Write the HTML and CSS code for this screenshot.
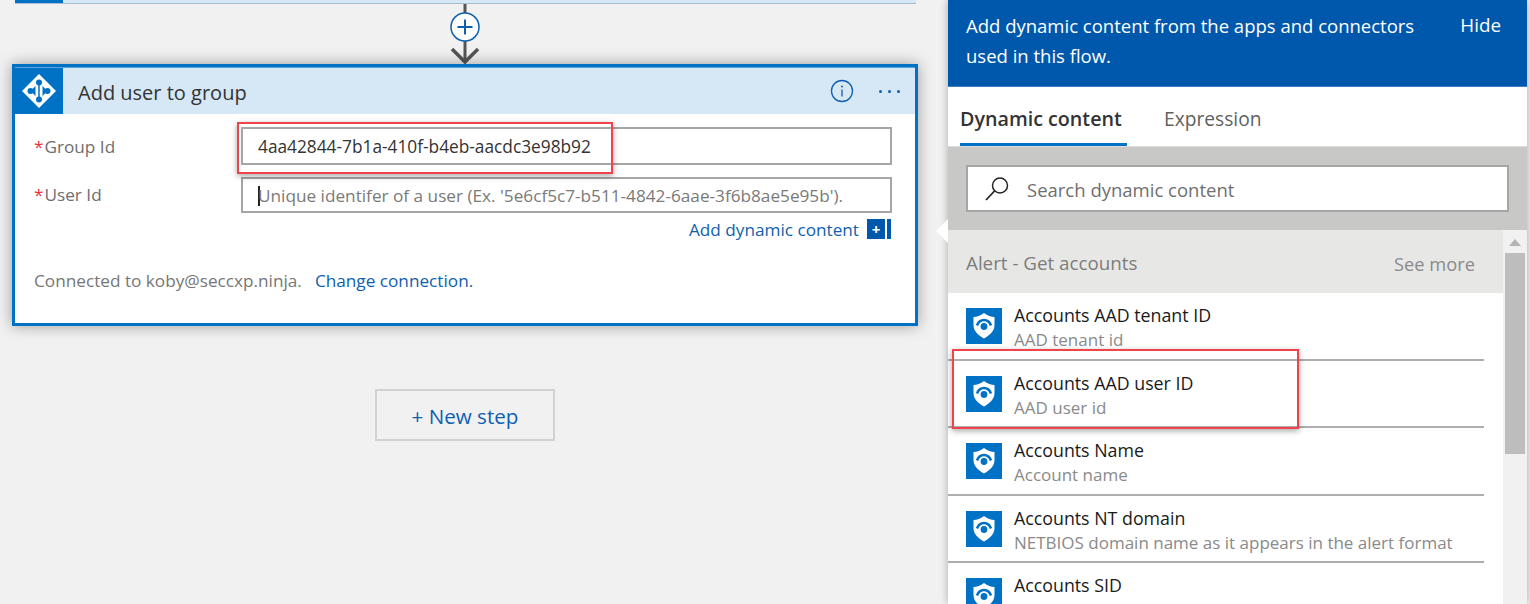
FILE: index.html
```html
<!DOCTYPE html>
<html lang="en">
<head>
<meta charset="utf-8">
<title>Add user to group</title>
<link rel="stylesheet" href="styles.css">
</head>
<body>
<svg class="defs" width="0" height="0" aria-hidden="true">
  <symbol id="shield" viewBox="0 0 36 36">
    <rect width="36" height="36" fill="#0072c6"/>
    <path d="M18 5C21.500 7.500 25 9 28.500 9V17C28.500 23 24 27 18 30.500C12 27 7.500 23 7.500 17V9C11 9 14.500 7.500 18 5Z" fill="#fff"/>
    <path d="M11 17.500C12.500 13.500 15 12 18 12C21 12 23.500 13.500 25 17.500" fill="none" stroke="#0072c6" stroke-width="2.600"/>
    <circle cx="18" cy="18.500" r="3.400" fill="#0072c6"/>
  </symbol>
</svg>
<div class="frame">
  <main class="canvas">
    <div class="prev-card"><span class="prev-mark"></span></div>
    <svg class="connector" width="32" height="60" viewBox="0 1 32 60">
      <path d="M16 0V59" stroke="#555" stroke-width="3" fill="none"/>
      <path d="M3 46L16 59L29 46" stroke="#555" stroke-width="3.500" fill="none"/>
      <circle cx="16" cy="24" r="14" fill="#fff" stroke="#0f5fb0" stroke-width="1.500"/>
      <path d="M8.500 24H23.500M16 16.500V31.500" stroke="#0f5fb0" stroke-width="2" fill="none"/>
    </svg>
    <section class="card">
      <header class="card-head">
        <span class="card-logo">
          <svg width="36" height="36" viewBox="0 0 36 36">
            <path d="M18 1L35 18L18 35L1 18Z" fill="#fff"/>
            <path d="M18 9.500L26.500 18L18 26.500L9.500 18Z" fill="#0072c6"/>
            <path d="M14.500 11H21.500V25H14.500Z" fill="#fff"/>
            <path d="M18 11V25" stroke="#0072c6" stroke-width="1.500"/>
            <circle cx="18" cy="9.500" r="3" fill="#0072c6"/>
            <circle cx="9.500" cy="18" r="3" fill="#0072c6"/>
            <circle cx="26.500" cy="18" r="3" fill="#0072c6"/>
            <circle cx="18" cy="26.500" r="3" fill="#0072c6"/>
          </svg>
        </span>
        <h2 class="card-title">Add user to group</h2>
        <svg class="info" width="24" height="24" viewBox="0 0 24 24">
          <circle cx="12" cy="12" r="10.500" fill="none" stroke="#0f5fb0" stroke-width="1.300"/>
          <path d="M12 10.500V17.500" stroke="#0f5fb0" stroke-width="1.300"/>
          <circle cx="12" cy="7.500" r="1" fill="#0f5fb0"/>
        </svg>
        <span class="dots"><i></i><i></i><i></i></span>
      </header>
      <div class="card-body">
        <div class="field">
          <label class="field-label"><span class="req">*</span>Group Id</label>
          <div class="input">4aa42844-7b1a-410f-b4eb-aacdc3e98b92</div>
        </div>
        <div class="field field-second">
          <label class="field-label"><span class="req">*</span>User Id</label>
          <div class="input input-empty"><span class="caret"></span>Unique identifer of a user (Ex. '5e6cf5c7-b511-4842-6aae-3f6b8ae5e95b').</div>
        </div>
        <div class="dyn-row">
          <a class="link dyn-link">Add dynamic content</a>
          <span class="dyn-btn">+</span><span class="dyn-bar"></span>
        </div>
        <p class="conn">Connected to koby@seccxp.ninja.<a class="link conn-link">Change connection.</a></p>
      </div>
    </section>
    <button class="new-step">+ New step</button>
  </main>

  <aside class="panel">
    <span class="notch"></span>
    <div class="panel-head">
      <p class="panel-msg">Add dynamic content from the apps and connectors used in this flow.</p>
      <span class="panel-hide">Hide</span>
    </div>
    <div class="tabs">
      <span class="tab tab-active">Dynamic content</span>
      <span class="tab tab-other">Expression</span>
    </div>
    <div class="search-band">
      <div class="search">
        <svg width="26" height="26" viewBox="0 0 26 26">
          <circle cx="16" cy="9.500" r="7.500" fill="#fff" stroke="#222" stroke-width="1.500"/>
          <path d="M10.500 15L2 24" stroke="#222" stroke-width="1.800"/>
        </svg>
        <span class="search-text">Search dynamic content</span>
      </div>
    </div>
    <div class="list-wrap">
      <div class="list">
        <div class="section"><span>Alert - Get accounts</span><span class="see-more">See more</span></div>
        <div class="item"><svg class="item-icon"><use href="#shield"/></svg><div><div class="item-title">Accounts AAD tenant ID</div><div class="item-sub">AAD tenant id</div></div></div>
        <div class="item"><svg class="item-icon"><use href="#shield"/></svg><div><div class="item-title">Accounts AAD user ID</div><div class="item-sub">AAD user id</div></div></div>
        <div class="item"><svg class="item-icon"><use href="#shield"/></svg><div><div class="item-title">Accounts Name</div><div class="item-sub">Account name</div></div></div>
        <div class="item"><svg class="item-icon"><use href="#shield"/></svg><div><div class="item-title">Accounts NT domain</div><div class="item-sub">NETBIOS domain name as it appears in the alert format</div></div></div>
        <div class="item"><svg class="item-icon"><use href="#shield"/></svg><div><div class="item-title">Accounts SID</div><div class="item-sub">Account security identifier, e.g. S-1-5-18</div></div></div>
      </div>
      <div class="scrollbar">
        <span class="scroll-up"></span>
        <span class="scroll-thumb"></span>
      </div>
    </div>
  </aside>
  <span class="callout callout-group"></span>
  <span class="callout callout-user"></span>
</div>
</body>
</html>
```
FILE: styles.css
```css
* { box-sizing: border-box; }
html, body { margin: 0; height: 604px; overflow: hidden; }
body { background: #f1f1f1; font-family: "Open Sans", "Noto Sans", sans-serif; color: #333; }
.defs { position: absolute; }
.frame { position: relative; display: flex; width: 1530px; height: 604px; overflow: hidden; }

.canvas { width: 948px; flex: none; display: flex; flex-direction: column; align-items: flex-start; padding-left: 12px; }
.prev-card { width: 901px; height: 4px; margin-left: 3px; background: #d6e8f5; border-bottom: 1px solid #a9bccb; flex: none; }
.prev-mark { display: block; width: 48px; height: 3px; background: #0072c6; }
.connector { display: block; margin-left: 437px; flex: none; }

.card { width: 906px; height: 262px; background: #fff; border: 3px solid #0072c6; box-shadow: 0 0 14px rgba(0,0,0,.35); flex: none; }
.card-head { height: 47px; display: flex; align-items: center; background: #d6e8f5; border-top: 1px solid #58a3da; }
.card-logo { width: 48px; height: 46px; background: #0072c6; display: flex; align-items: center; justify-content: center; flex: none; }
.card-title { margin: 2px 0 0 15px; flex: 1; font-size: 20px; font-weight: 400; color: #333; }
.info { flex: none; margin-right: 25px; }
.dots { display: flex; gap: 6px; margin-right: 15px; }
.dots i { width: 3px; height: 3px; border-radius: 50%; background: #0f5fb0; }

.card-body { padding: 13px 0 0 19px; }
.field { display: flex; align-items: center; height: 38px; }
.field-second { margin-top: 12px; height: 36px; }
.field-label { width: 207px; flex: none; font-size: 17.200px; color: #6e6e6e; }
.field-second .field-label { margin-top: -2px; }
.req { color: #e8343c; margin-right: 1px; }
.input { width: 651px; height: 100%; flex: none; display: flex; align-items: center; padding: 1px 0 0 15px; border: 2px solid #a6a6a6; background: #fff; font-size: 17.300px; color: #333; white-space: nowrap; overflow: hidden; }
.input-empty { color: #7a7a7a; font-size: 17.200px; }
.caret { width: 1.500px; height: 20px; background: #222; flex: none; margin-right: -1.500px; }
.dyn-row { display: flex; align-items: center; justify-content: flex-end; height: 20px; margin: 6px 24px 0 0; }
.link { color: #0f5fb0; }
.dyn-link { font-size: 17.200px; margin-right: 8px; }
.dyn-btn { width: 18px; height: 20px; background: #0058ad; color: #fff; display: flex; align-items: center; justify-content: center; font-size: 15px; font-weight: 700; }
.dyn-bar { width: 4px; height: 20px; margin-left: 2px; background: #0058ad; }
.conn { margin: 30px 0 0; font-size: 17.200px; color: #767676; }
.conn-link { margin-left: 13px; }

.new-step { width: 180px; height: 52px; margin: 63px 0 0 363px; flex: none; padding: 2px 0 0; background: #f1f1f1; border: 2px solid #d2d2d2; font-family: inherit; font-size: 20.600px; color: #0f5fb0; }

.panel { position: relative; width: 579px; height: 604px; flex: none; display: flex; flex-direction: column; background: #fff; box-shadow: 0 0 8px rgba(0,0,0,.3); }
.notch { position: absolute; left: -12px; top: 219px; width: 0; height: 0; border-style: solid; border-width: 12px 12px 12px 0; border-color: transparent #fff transparent transparent; }
.panel-head { height: 87px; flex: none; display: flex; justify-content: space-between; padding: 11px 26px 0 18px; background: #0058ad; color: #fff; border-bottom: 1px solid #3b80c4; }
.panel-msg { margin: 0; width: 480px; font-size: 18.500px; line-height: 29.500px; }
.panel-hide { font-size: 18.800px; line-height: 29.500px; }
.tabs { height: 60px; flex: none; display: flex; padding-left: 12px; border-bottom: 1px solid #dcdcdc; }
.tab { height: 59px; line-height: 64px; font-size: 19.200px; white-space: nowrap; }
.tab-active { width: 167px; font-size: 19.700px; font-weight: 600; color: #333; border-bottom: 3px solid #0072c6; }
.tab-other { margin-left: 37px; color: #5f5f5f; }
.search-band { height: 83px; flex: none; padding: 18px 18px 0; background: #c8c9c6; }
.search { height: 47px; display: flex; align-items: center; padding-left: 16px; background: #fff; border: 2px solid #a6a6a6; }
.search-text { margin: 2px 0 0 17px; font-size: 18.500px; color: #6f6f6f; }
.list-wrap { flex: 1; display: flex; min-height: 0; overflow: hidden; }
.list { width: 555px; flex: none; }
.section { height: 63px; display: flex; align-items: center; justify-content: space-between; padding: 3px 28px 0 18px; background: #e7e8e6; font-size: 18.800px; color: #7c7c7c; }
.see-more { font-size: 18.300px; color: #8a8a8a; }
.item { height: 67.500px; display: flex; align-items: flex-start; padding: 15px 0 0 18px; border-bottom: 2px solid #aeaeae; width: 536px; }
.item-icon { width: 36px; height: 36px; flex: none; margin-right: 12px; }
.item-title { font-size: 17.800px; line-height: 22px; margin-top: -4px; color: #1a1a1a; }
.item-sub { font-size: 17px; line-height: 22px; margin-top: 3px; color: #8a8a8a; white-space: nowrap; }
.scrollbar { flex: 1; position: relative; background: #f1f1f1; }
.scroll-up { display: block; width: 0; height: 0; margin: 9px auto 7px; border-style: solid; border-width: 0 6px 7px; border-color: transparent transparent #b4b4b4; }
.scroll-thumb { display: block; width: 20px; height: 201px; margin: 0 auto; background: #bdbdbd; }

.callout { position: absolute; border: 2px solid #f0434b; box-shadow: 0 2px 6px rgba(0,0,0,.35); }
.callout-group { left: 237px; top: 122px; width: 376px; height: 52px; }
.callout-user { left: 952px; top: 349px; width: 347px; height: 80px; }
```
